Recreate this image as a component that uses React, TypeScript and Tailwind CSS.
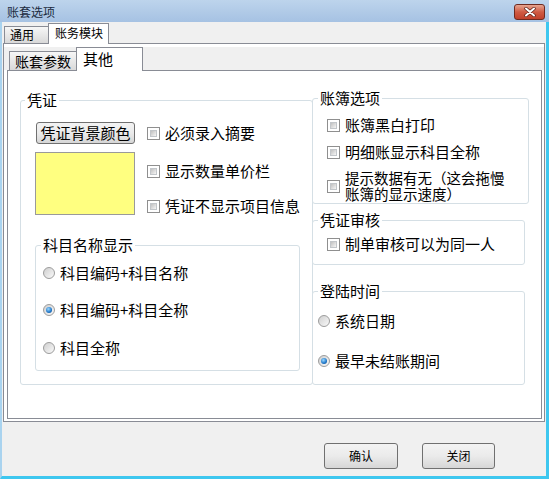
import React from 'react'

const font = "font-['Noto_Sans_CJK_SC',sans-serif]"

function Check() {
  return (
    <span className="w-[13px] h-[13px] shrink-0 border border-[#8f8f8f] bg-white p-[2px] flex">
      <span className="flex-1 border border-[#c2c6ca] bg-linear-to-br from-[#c0c0c0] to-[#f6f6f6]" />
    </span>
  )
}

function Radio({ checked }: { checked?: boolean }) {
  return (
    <span className="w-[12px] h-[12px] shrink-0 rounded-full border border-[#9c9c9c] bg-linear-to-br from-[#cfcfcf] to-[#fafafa] flex items-center justify-center">
      {checked && (
        <span className="w-[6px] h-[6px] rounded-full bg-[radial-gradient(circle_at_40%_35%,#9ad8ff,#1f76c8_60%,#0c3f7c)]" />
      )}
    </span>
  )
}

function CheckRow({ label, className = '' }: { label: string; className?: string }) {
  return (
    <div className={`flex items-center text-[15px] leading-[20px] ${className}`}>
      <Check />
      <span className="ml-[5px] whitespace-nowrap">{label}</span>
    </div>
  )
}

function RadioRow({ label, checked, className = '' }: { label: string; checked?: boolean; className?: string }) {
  return (
    <div className={`flex items-center text-[15px] leading-[20px] ${className}`}>
      <Radio checked={checked} />
      <span className="ml-[5px] whitespace-nowrap">{label}</span>
    </div>
  )
}

function GroupLabel({ children, left = 'left-[5px]' }: { children: React.ReactNode; left?: string }) {
  return (
    <span className={`absolute ${left} top-[-11px] px-[2px] bg-white text-[15px] leading-[20px] whitespace-nowrap`}>
      {children}
    </span>
  )
}

const btn =
  'border border-[#707070] rounded-[3px] bg-linear-to-b from-[#f3f3f3] via-[#ebebeb] to-[#d6d6d6] flex items-center justify-center'

export default function App() {
  return (
    <div className={`w-[549px] h-[479px] flex flex-col bg-[#f0f0f0] overflow-hidden text-black ${font}`}>
      {/* Title bar */}
      <div className="h-[22px] shrink-0 flex items-start justify-between pl-[7px] pr-[4px] pt-[4px] bg-linear-to-b from-[#bdd4ec] to-[#a6c2e3]">
        <span className="text-[12px] leading-[16px] text-[#1b2b3e]">账套选项</span>
        <span className="w-[31px] h-[16px] rounded-[3px] border border-[#6e2a20] bg-linear-to-b from-[#e6a591] via-[#cf5a43] to-[#c1402b] flex items-center justify-center">
          <svg width="12" height="10" viewBox="0 0 12 10">
            <path d="M2 1.5 L10 8.5 M10 1.5 L2 8.5" stroke="#5a2018" strokeWidth="3.4" strokeLinecap="round" />
            <path d="M2 1.5 L10 8.5 M10 1.5 L2 8.5" stroke="#ffffff" strokeWidth="2" strokeLinecap="round" />
          </svg>
        </span>
      </div>

      {/* Client */}
      <div className="flex-1 flex flex-col border-l-2 border-l-[#a9d3ef] border-r-[3px] border-r-[#3ec7ef] border-b-[3px] border-b-[#3ec7ef]">
        {/* Outer tabs */}
        <div className="h-[21px] shrink-0 flex items-end pl-[2px]">
          <div className="w-[45px] h-[17px] border border-b-0 border-[#898c95] bg-linear-to-b from-[#f7f7f7] to-[#d9d9d9] text-[12px] leading-[16px] pl-[5px]">
            通用
          </div>
          <div className="relative z-10 -ml-px mb-[-1px] w-[61px] h-[21px] border border-b-0 border-[#898c95] bg-white text-[12px] leading-[18px] pl-[6px]">
            账务模块
          </div>
        </div>

        {/* Outer panel */}
        <div className="ml-[1px] w-[542px] h-[379px] shrink-0 border border-[#898c95] bg-white pt-[3px]">
          {/* Inner tabs */}
          <div className="h-[23px] bg-[#f0f0f0] flex items-end pl-[5px]">
            <div className="w-[68px] h-[19px] border border-b-0 border-[#898c95] bg-linear-to-b from-[#f7f7f7] to-[#d9d9d9] text-[14px] leading-[18px] pl-[5px]">
              账套参数
            </div>
            <div className="relative z-10 -ml-px mb-[-1px] w-[67px] h-[24px] border border-b-0 border-[#898c95] bg-white text-[15px] leading-[20px] pl-[6px] pt-[1px]">
              其他
            </div>
          </div>

          {/* Inner panel */}
          <div className="ml-[3px] w-[535px] h-[349px] border border-[#898c95] bg-white flex items-start pl-[12px] pt-[27px]">
            {/* 凭证 */}
            <div className="relative mt-[2px] w-[293px] h-[285px] shrink-0 border border-[#d5dfe5] rounded-[3px] pl-[14px] pt-[21px]">
              <GroupLabel left="left-[4px]">凭证</GroupLabel>
              <div className="flex items-start">
                <div className="w-[100px] shrink-0">
                  <div className={`ml-[1px] w-[99px] h-[22px] text-[15px] leading-[20px] ${btn}`}>凭证背景颜色</div>
                  <div className="mt-[8px] w-[100px] h-[63px] border border-[#9a9a9a] bg-[#ffff80]" />
                </div>
                <div className="ml-[12px] flex flex-col">
                  <CheckRow label="必须录入摘要" className="mt-[1px]" />
                  <CheckRow label="显示数量单价栏" className="mt-[18px]" />
                  <CheckRow label="凭证不显示项目信息" className="mt-[15px]" />
                </div>
              </div>

              {/* 科目名称显示 */}
              <div className="relative mt-[29px] w-[265px] h-[126px] border border-[#d5dfe5] rounded-[3px] pl-[7px] pt-[17px]">
                <GroupLabel>科目名称显示</GroupLabel>
                <RadioRow label="科目编码+科目名称" />
                <RadioRow label="科目编码+科目全称" checked className="mt-[17px]" />
                <RadioRow label="科目全称" className="mt-[18px]" />
              </div>
            </div>

            {/* Right column */}
            <div className="-ml-px flex flex-col">
              <div className="relative w-[217px] h-[106px] border border-[#d5dfe5] rounded-[3px] bg-white pl-[14px] pt-[16px]">
                <GroupLabel>账簿选项</GroupLabel>
                <CheckRow label="账簿黑白打印" />
                <CheckRow label="明细账显示科目全称" className="mt-[7px]" />
                <div className="mt-[8px] flex items-center">
                  <Check />
                  <div className="ml-[5px] flex flex-col text-[14.5px] leading-[16px] whitespace-nowrap">
                    <span>提示数据有无（这会拖慢</span>
                    <span>账簿的显示速度）</span>
                  </div>
                </div>
              </div>

              <div className="relative mt-[16px] w-[213px] h-[45px] border border-[#d5dfe5] rounded-[3px] bg-white pl-[14px] pt-[13px]">
                <GroupLabel>凭证审核</GroupLabel>
                <CheckRow label="制单审核可以为同一人" />
              </div>

              <div className="relative mt-[26px] w-[213px] h-[94px] border border-[#d5dfe5] rounded-[3px] bg-white pl-[5px] pt-[19px]">
                <GroupLabel>登陆时间</GroupLabel>
                <RadioRow label="系统日期" />
                <RadioRow label="最早未结账期间" checked className="mt-[20px]" />
              </div>
            </div>
          </div>
        </div>

        {/* Buttons */}
        <div className="mt-[21px] flex justify-end gap-[24px] pr-[51px]">
          <div className={`w-[74px] h-[26px] text-[12px] ${btn}`}>确认</div>
          <div className={`w-[73px] h-[26px] text-[12px] ${btn}`}>关闭</div>
        </div>
      </div>
    </div>
  )
}
